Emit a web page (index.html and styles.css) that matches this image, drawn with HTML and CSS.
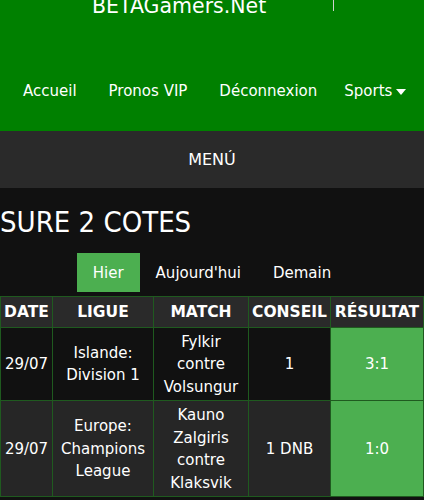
FILE: index.html
```html
<!DOCTYPE html>
<html lang="fr">
<head>
<meta charset="utf-8">
<title>BETAGamers.Net</title>
<link rel="stylesheet" href="styles.css">
</head>
<body>
<header class="topbar">
  <div class="brand-row">
    <span class="brand">BETAGamers.Net</span>
    <span class="sep"></span>
  </div>
  <nav class="nav">
    <a class="nav-link">Accueil</a>
    <a class="nav-link">Pronos VIP</a>
    <a class="nav-link">Déconnexion</a>
    <a class="nav-link nav-last">Sports <span class="caret"></span></a>
  </nav>
</header>
<div class="menubar">MENÚ</div>
<main class="content">
  <h1 class="title">SURE 2 COTES</h1>
  <div class="tabs">
    <a class="tab active">Hier</a>
    <a class="tab">Aujourd'hui</a>
    <a class="tab">Demain</a>
  </div>
  <table class="tips">
    <colgroup>
      <col class="c-date"><col class="c-league"><col class="c-match"><col class="c-tip"><col class="c-res">
    </colgroup>
    <thead>
      <tr><th>DATE</th><th>LIGUE</th><th>MATCH</th><th>CONSEIL</th><th>RÉSULTAT</th></tr>
    </thead>
    <tbody>
      <tr class="odd"><td>29/07</td><td>Islande: Division 1</td><td>Fylkir contre Volsungur</td><td>1</td><td class="win">3:1</td></tr>
      <tr class="even"><td>29/07</td><td>Europe: Champions League</td><td>Kauno Zalgiris contre Klaksvik</td><td>1 DNB</td><td class="win">1:0</td></tr>
    </tbody>
  </table>
</main>
</body>
</html>
```
FILE: styles.css
```css
html, body {
  margin: 0;
  padding: 0;
  background: #111111;
  font-family: "DejaVu Sans", Verdana, sans-serif;
  color: #ffffff;
}
.topbar {
  background: #008000;
  height: 131px;
}
.brand-row {
  position: relative;
  height: 20px;
}
.brand {
  position: absolute;
  left: 92px;
  top: -8px;
  font-size: 20.5px;
  line-height: 28px;
  color: #ffffff;
}
.sep {
  position: absolute;
  left: 333px;
  top: 0;
  width: 1px;
  height: 11px;
  background: #d0d0d0;
}
.nav {
  display: flex;
  padding-left: 23px;
  gap: 32px;
  margin-top: 61px;
  font-size: 15px;
  line-height: 20px;
}
.nav-link {
  color: #ffffff;
  white-space: nowrap;
  display: flex;
  align-items: center;
}
.nav-last {
  margin-left: -5px;
}
.caret {
  display: inline-block;
  width: 0;
  height: 0;
  margin-left: 4px;
  margin-top: 2px;
  border-left: 5px solid transparent;
  border-right: 5px solid transparent;
  border-top: 6px solid #ffffff;
}
.menubar {
  background: #2a2a2a;
  height: 57px;
  display: flex;
  align-items: center;
  justify-content: center;
  font-size: 16px;
}
.content {
  padding-top: 14px;
}
.title {
  margin: 0;
  font-family: "DejaVu Sans Condensed", "DejaVu Sans", sans-serif;
  font-stretch: condensed;
  font-size: 29px;
  font-weight: normal;
  line-height: 40px;
}
.tabs {
  display: flex;
  justify-content: center;
  margin-top: 11px;
  font-size: 15px;
}
.tab {
  padding: 0 16px;
  height: 39px;
  display: flex;
  align-items: center;
  color: #ffffff;
}
.tab.active {
  background: #4caf50;
}
.tips {
  margin-top: 4px;
  width: 424px;
  table-layout: fixed;
  border-collapse: collapse;
  font-size: 15px;
  line-height: 22.5px;
  text-align: center;
}
.tips th, .tips td {
  border: 1px solid #1f5a1f;
  padding: 3px 2px 2px;
}
.tips th {
  background: #2a2a2a;
  font-weight: bold;
  font-size: 15.5px;
  padding: 4px 0 3px;
  white-space: nowrap;
}
.c-date { width: 52px; }
.c-league { width: 101px; }
.c-match { width: 95px; }
.c-tip { width: 82px; }
.tips tr.odd td { background: #111111; }
.tips tr.even td { background: #262626; }
.tips td.win, .tips tr.odd td.win, .tips tr.even td.win { background: #4caf50; }
```
